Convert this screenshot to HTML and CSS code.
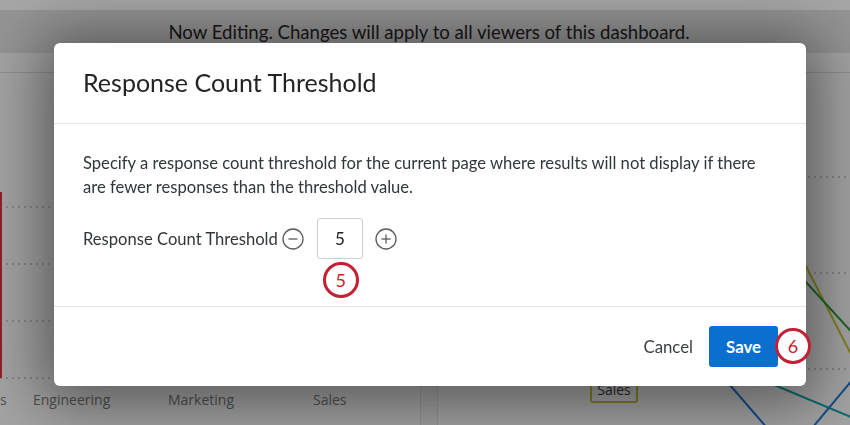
FILE: index.html
```html
<!DOCTYPE html>
<html lang="en">
<head>
  <meta charset="UTF-8">
  <meta name="viewport" content="width=device-width, initial-scale=1.0">
  <title>Response Count Threshold</title>
  <link rel="stylesheet" href="styles.css">
</head>
<body>
  <div class="dashboard">
    <div class="topnav"></div>
    <div class="edit-banner">Now Editing. Changes will apply to all viewers of this dashboard.</div>
    <div class="toolbar"></div>
    <div class="widgets">
      <div class="widget">
        <svg class="chart" width="420" height="352" viewBox="0 0 420 352">
          <g class="grid">
            <line x1="0" y1="134" x2="420" y2="134"/>
            <line x1="0" y1="191" x2="420" y2="191"/>
            <line x1="0" y1="248" x2="420" y2="248"/>
            <line x1="0" y1="305" x2="420" y2="305"/>
          </g>
          <rect class="bar" x="-20" y="119" width="22" height="186"/>
          <g class="axis-label">
            <text x="0" y="332">s</text>
            <text x="33" y="332">Engineering</text>
            <text x="168" y="332">Marketing</text>
            <text x="313" y="332">Sales</text>
          </g>
        </svg>
      </div>
      <div class="gutter"></div>
      <div class="widget">
        <svg class="chart" width="412" height="352" viewBox="0 0 412 352">
          <g class="grid">
            <line x1="10" y1="104" x2="412" y2="104"/>
            <line x1="10" y1="200" x2="412" y2="200"/>
            <line x1="10" y1="296" x2="412" y2="296"/>
          </g>
          <line class="series s-olive" x1="300" y1="60" x2="420" y2="295"/>
          <line class="series s-green" x1="250" y1="80" x2="420" y2="266"/>
          <line class="series s-teal" x1="250" y1="276" x2="420" y2="347"/>
          <line class="series s-blue" x1="200" y1="206" x2="330" y2="356"/>
          <line class="series s-blue" x1="370" y1="360" x2="420" y2="300"/>
          <rect class="tag" x="153" y="304" width="46" height="25" rx="2"/>
          <text class="tag-text" x="176" y="322">Sales</text>
        </svg>
      </div>
    </div>
  </div>

  <div class="overlay">
    <div class="modal">
      <div class="modal-header">
        <h2>Response Count Threshold</h2>
      </div>
      <div class="modal-body">
        <p>Specify a response count threshold for the current page where results will not display if there are fewer responses than the threshold value.</p>
        <div class="threshold-row">
          <span class="threshold-label">Response Count Threshold</span>
          <button class="step">
            <svg width="22" height="22" viewBox="0 0 22 22"><circle cx="11" cy="11" r="10"/><line x1="6.5" y1="11" x2="15.5" y2="11"/></svg>
          </button>
          <div class="threshold-field">
            <input type="text" value="5">
            <span class="callout callout-below">5</span>
          </div>
          <button class="step">
            <svg width="22" height="22" viewBox="0 0 22 22"><circle cx="11" cy="11" r="10"/><line x1="6.5" y1="11" x2="15.5" y2="11"/><line x1="11" y1="6.5" x2="11" y2="15.5"/></svg>
          </button>
        </div>
      </div>
      <div class="modal-footer">
        <button class="btn-link">Cancel</button>
        <div class="save-wrap">
          <button class="btn-primary">Save</button>
          <span class="callout callout-right">6</span>
        </div>
      </div>
    </div>
  </div>
</body>
</html>
```

FILE: styles.css
```css
* {
  box-sizing: border-box;
}
body {
  margin: 0;
  font-family: Lato, 'Open Sans', sans-serif;
  color: #32363a;
  background: #f4f4f4;
  height: 425px;
  overflow: hidden;
}
.dashboard {
  display: flex;
  flex-direction: column;
  height: 425px;
}
.topnav {
  height: 10px;
  background: #ffffff;
}
.edit-banner {
  height: 43px;
  background: #e3e3e3;
  color: #262626;
  font-size: 18.6px;
  line-height: 43px;
  padding: 1px 0 0 8px;
  text-align: center;
}
.toolbar {
  height: 20px;
  background: #fbfbfb;
  border-bottom: 1px solid #dcdcdc;
}
.widgets {
  flex: 1;
  display: flex;
}
.widget {
  background: #fbfbfb;
  overflow: hidden;
}
.widget:first-child {
  width: 420px;
}
.widget:last-child {
  flex: 1;
}
.gutter {
  width: 18px;
  background: #f6f6f6;
  border-left: 1px solid #e2e2e2;
  border-right: 1px solid #e2e2e2;
}
.chart {
  display: block;
  overflow: visible;
}
.grid line {
  stroke: #bdbdbd;
  stroke-width: 1.5;
  stroke-dasharray: 2 4;
}
.bar {
  fill: #e0323b;
}
.axis-label text {
  font-family: 'Open Sans', sans-serif;
  font-size: 14px;
  fill: #7c7c7c;
}
.series {
  stroke-width: 2;
}
.s-olive { stroke: #c3c52e; }
.s-green { stroke: #2f9a3e; }
.s-teal { stroke: #18a4ae; }
.s-blue { stroke: #1f79d6; }
.tag {
  fill: #fbfbfb;
  stroke: #c6c63a;
  stroke-width: 2;
}
.tag-text {
  font-family: 'Open Sans', sans-serif;
  font-size: 14px;
  fill: #3c3c3c;
  text-anchor: middle;
}

/* modal */
.overlay {
  position: fixed;
  inset: 0;
  background: rgba(0, 0, 0, 0.35);
}
.modal {
  width: 752px;
  margin: 43px 0 0 54px;
  background: #ffffff;
  border-radius: 6px;
  box-shadow: 0 6px 60px 14px rgba(0, 0, 0, 0.45);
}
.modal-header {
  padding: 24px 29px 26px;
  border-bottom: 1px solid #e6e6e6;
}
.modal-header h2 {
  margin: 0;
  font-size: 25px;
  font-weight: 400;
  line-height: 30px;
  color: #242424;
}
.modal-body {
  padding: 27px 29px 47px;
  border-bottom: 1px solid #e6e6e6;
}
.modal-body p {
  margin: 0 0 19px;
  font-size: 16.6px;
  line-height: 24px;
}
.threshold-row {
  display: flex;
  align-items: center;
  height: 41px;
}
.threshold-label {
  font-size: 16.6px;
  margin-right: 4px;
}
.step {
  display: flex;
  padding: 0;
  border: none;
  background: none;
}
.step svg {
  fill: none;
  stroke: #5a5a5a;
  stroke-width: 1.3;
}
.threshold-field {
  position: relative;
  margin: 0 12px 0 13px;
}
.threshold-field input {
  display: block;
  width: 46px;
  height: 41px;
  border: 1px solid #cfcfcf;
  border-radius: 3px;
  font-family: Lato, sans-serif;
  font-size: 17px;
  color: #222;
  text-align: center;
}
.modal-footer {
  display: flex;
  justify-content: flex-end;
  align-items: center;
  gap: 4px;
  padding: 19px 28px;
}
.btn-link {
  height: 41px;
  padding: 0 12px;
  border: none;
  background: none;
  font-family: Lato, sans-serif;
  font-size: 16.8px;
  color: #3c3f42;
}
.save-wrap {
  position: relative;
}
.btn-primary {
  display: block;
  height: 41px;
  padding: 0 17px;
  border: none;
  border-radius: 3px;
  background: #0b6fd0;
  color: #ffffff;
  font-family: Lato, sans-serif;
  font-size: 16.8px;
  font-weight: 700;
}

/* numbered annotations */
.callout {
  position: absolute;
  width: 36px;
  height: 36px;
  border: 3px solid #c41f35;
  border-radius: 50%;
  background: #ffffff;
  color: #c41f35;
  font-size: 18px;
  line-height: 30px;
  text-align: center;
}
.callout-below {
  top: 44px;
  left: calc(50% + 1px);
  transform: translateX(-50%);
}
.callout-right {
  left: 66px;
  top: 2px;
}
```
